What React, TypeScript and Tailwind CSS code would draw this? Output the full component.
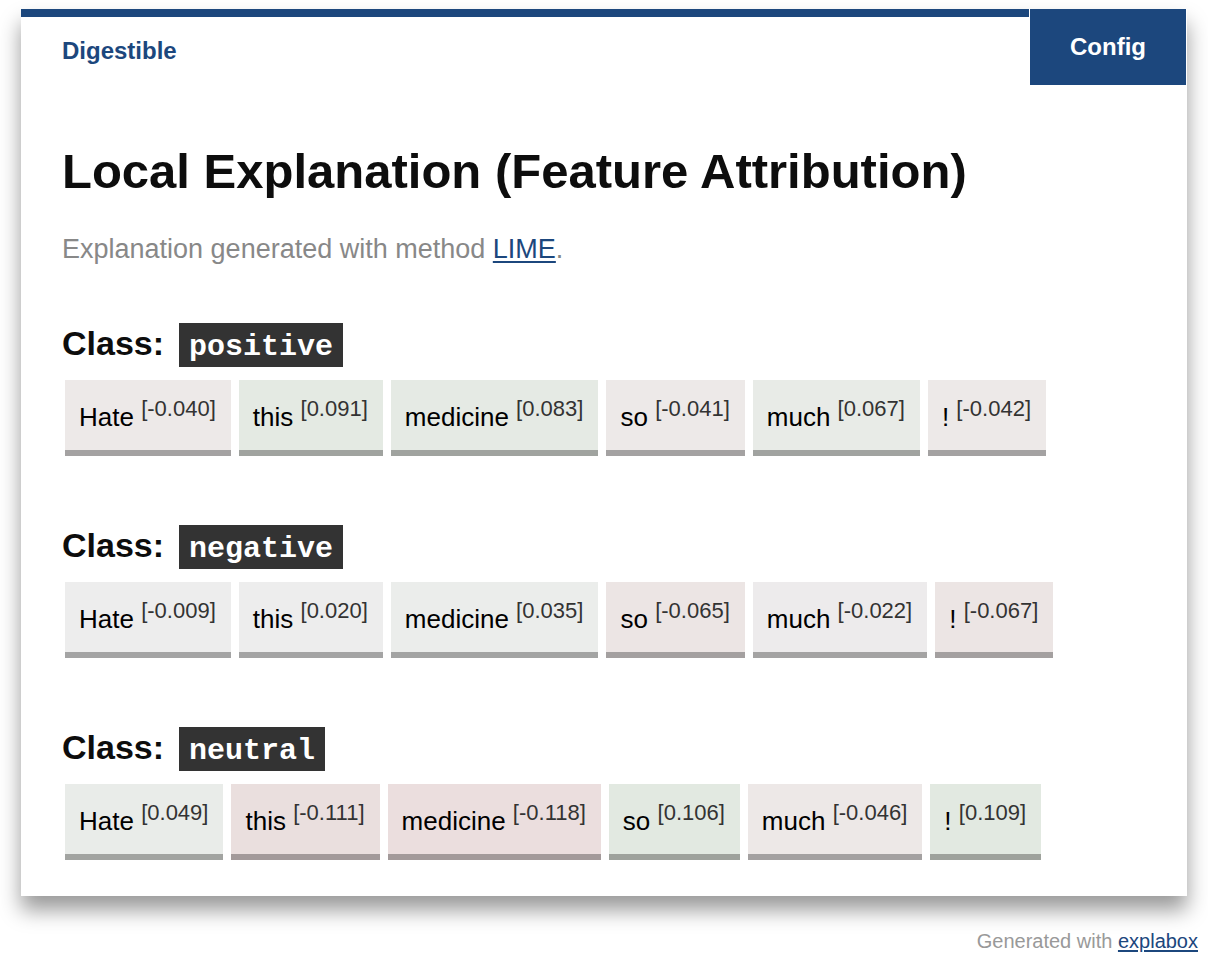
type Token = { word: string; score: string; tone: string };
type ClassResult = { name: string; tokens: Token[] };

const results: ClassResult[] = [
  {
    name: "positive",
    tokens: [
      { word: "Hate", score: "-0.040", tone: "bg-[#ede9e8] border-[#a4a2a2]" },
      { word: "this", score: "0.091", tone: "bg-[#e4eae3] border-[#a0a39f]" },
      { word: "medicine", score: "0.083", tone: "bg-[#e5eae4] border-[#a0a39f]" },
      { word: "so", score: "-0.041", tone: "bg-[#ede9e8] border-[#a4a2a2]" },
      { word: "much", score: "0.067", tone: "bg-[#e8ebe7] border-[#a1a3a0]" },
      { word: "!", score: "-0.042", tone: "bg-[#ede9e8] border-[#a4a2a2]" },
    ],
  },
  {
    name: "negative",
    tokens: [
      { word: "Hate", score: "-0.009", tone: "bg-[#ededed] border-[#a4a4a4]" },
      { word: "this", score: "0.020", tone: "bg-[#ededed] border-[#a4a4a4]" },
      { word: "medicine", score: "0.035", tone: "bg-[#ebedeb] border-[#a3a4a3]" },
      { word: "so", score: "-0.065", tone: "bg-[#ece5e4] border-[#a4a0a0]" },
      { word: "much", score: "-0.022", tone: "bg-[#edebec] border-[#a4a3a3]" },
      { word: "!", score: "-0.067", tone: "bg-[#ece5e4] border-[#a4a0a0]" },
    ],
  },
  {
    name: "neutral",
    tokens: [
      { word: "Hate", score: "0.049", tone: "bg-[#e9ece9] border-[#a2a4a1]" },
      { word: "this", score: "-0.111", tone: "bg-[#eadfde] border-[#a39a9a]" },
      { word: "medicine", score: "-0.118", tone: "bg-[#ebdede] border-[#a39a9a]" },
      { word: "so", score: "0.106", tone: "bg-[#e2e9e1] border-[#9ea29c]" },
      { word: "much", score: "-0.046", tone: "bg-[#ede8e7] border-[#a4a1a1]" },
      { word: "!", score: "0.109", tone: "bg-[#e2e9e1] border-[#9ea29c]" },
    ],
  },
];

function TokenChip({ word, score, tone }: Token) {
  return (
    <li className={`flex h-[76px] items-start border-b-[6px] pr-[15px] pl-[14px] ${tone}`}>
      <span className="mt-[21px] whitespace-pre text-[26px] leading-8 text-black">{word} </span>
      <span className="mt-[15px] text-[22px] leading-7 text-[#333333]">[{score}]</span>
    </li>
  );
}

function ClassSection({ name, tokens }: ClassResult) {
  return (
    <section>
      <h2 className="flex items-baseline gap-[13px] text-[34px] leading-10 font-bold">
        <span>Class:</span>
        <code className="border-2 border-white bg-[#333333] px-[10px] pt-1 font-['Liberation_Mono',monospace] text-[30px] text-white">
          {name}
        </code>
      </h2>
      <ul className="mt-[11px] ml-[3px] flex flex-wrap gap-2">
        {tokens.map((token) => (
          <TokenChip key={token.word} {...token} />
        ))}
      </ul>
    </section>
  );
}

export default function App() {
  return (
    <div className="bg-white pt-[9px] font-['Liberation_Sans',Arial,sans-serif] text-[#0d0d0d]">
      <main className="mx-[21px] bg-white pb-9 shadow-[0_14px_20px_rgba(0,0,0,0.4)]">
        <header className="flex items-start">
          <div className="mr-px grow border-t-8 border-[#1c477d] pt-[18px] pl-[41px]">
            <span className="text-2xl leading-8 font-bold text-[#1c477d]">Digestible</span>
          </div>
          <button type="button" className="mr-px h-[76px] bg-[#1c477d] px-10 text-2xl font-bold text-white">
            Config
          </button>
        </header>
        <div className="px-[41px] pt-[56px]">
          <h1 className="text-[49px] leading-[60px] font-bold">Local Explanation (Feature Attribution)</h1>
          <p className="mt-8 text-[27px] leading-8 text-[#888888]">
            Explanation generated with method{" "}
            <a href="#lime" className="text-[#1c477d] underline decoration-2 underline-offset-3">LIME</a>.
          </p>
          <div className="mt-[56px] flex flex-col gap-[67px]">
            {results.map((result) => (
              <ClassSection key={result.name} {...result} />
            ))}
          </div>
        </div>
      </main>
      <footer className="mt-[31px] pr-[10px] text-right text-xl leading-7 text-[#999999]">
        Generated with{" "}
        <a href="#explabox" className="text-[#1c477d] underline decoration-2 underline-offset-2">explabox</a>
      </footer>
    </div>
  );
}
